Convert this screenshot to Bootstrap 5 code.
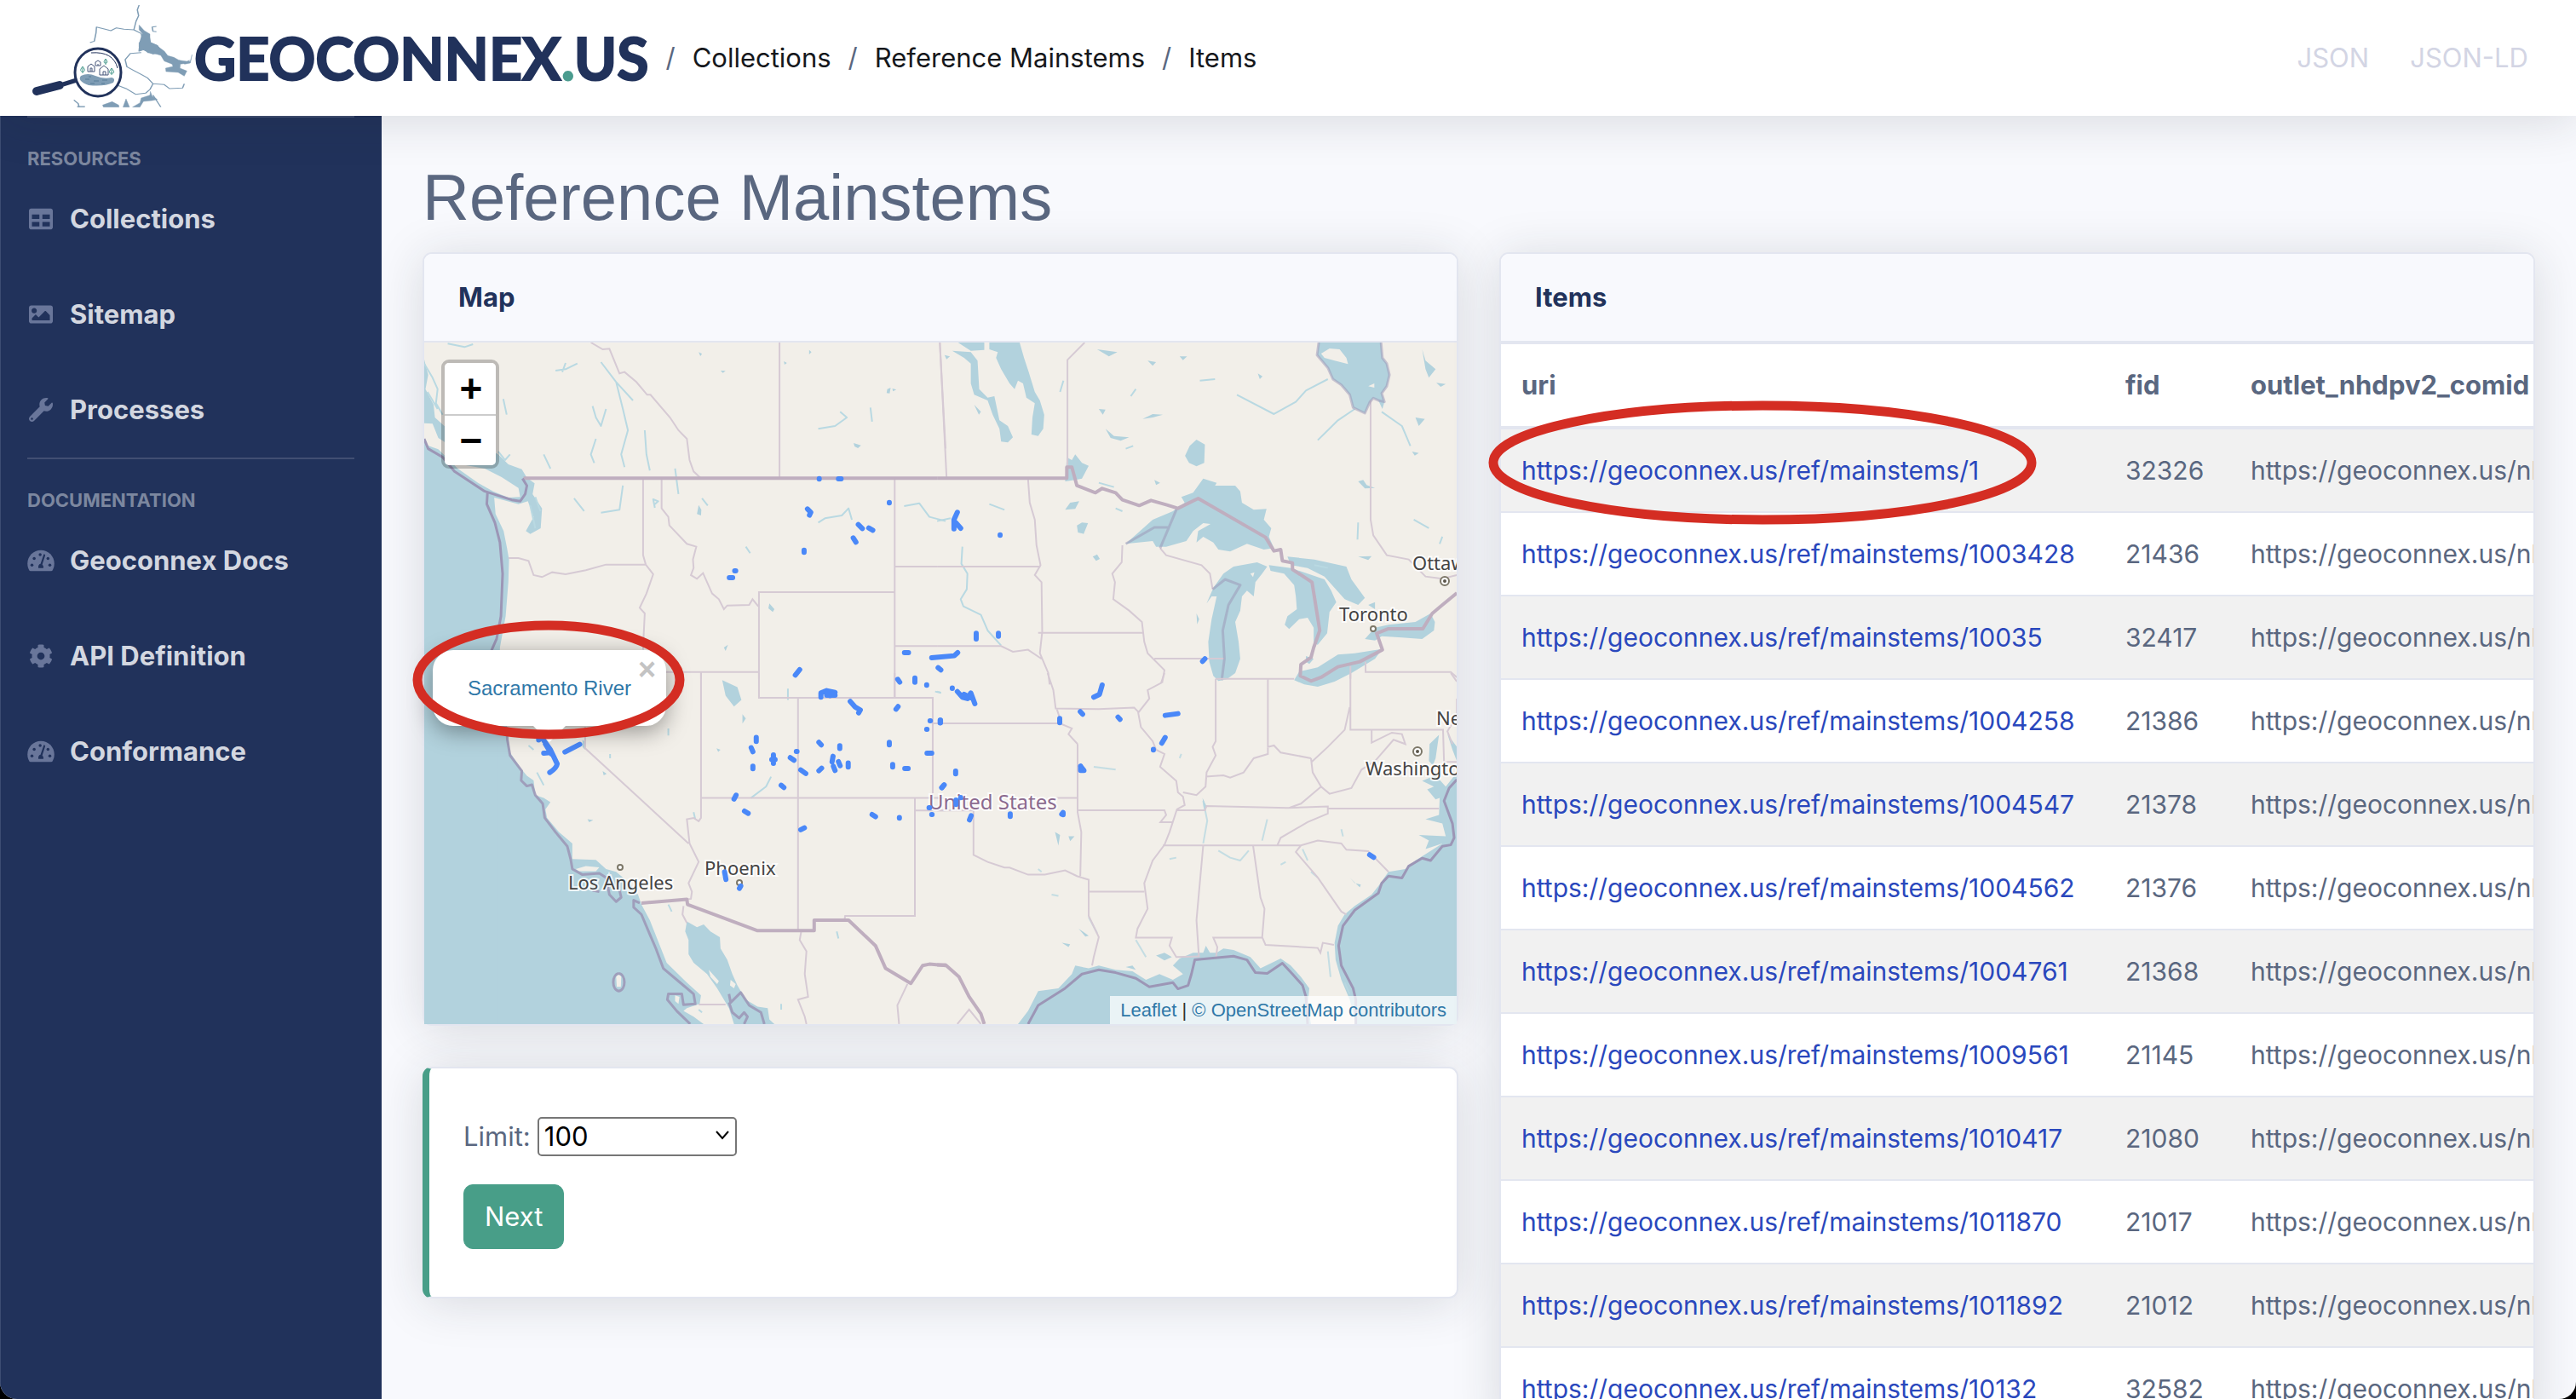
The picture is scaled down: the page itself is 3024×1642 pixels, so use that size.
<!DOCTYPE html>
<html lang="en">
<head>
<meta charset="utf-8">
<meta name="viewport" content="width=device-width, initial-scale=1">
<title>Reference Mainstems - geoconnex.us</title>
<link href="https://cdn.jsdelivr.net/npm/bootstrap@5.3.0/dist/css/bootstrap.min.css" rel="stylesheet">
<style>
:root{--navy:#21325b;--slate:#5a6780;--line:#e3e6f0;--green:#489e88;--water:#b2d2dd}
html{background:#000}
body{font-family:Inter,"Liberation Sans",sans-serif;font-size:31px;line-height:48px;color:var(--slate);background:#000}
.app{background:#f8f9fd;border-radius:0 0 20px 20px}
.soft-shadow{box-shadow:0 5px 56px 0 rgba(33,40,50,.15)}
.topbar{height:136px;background:#fff;z-index:5;position:relative;padding:0 56px 0 0}
.brand-art{width:228px;height:136px}
.brand-name{font-family:Lato,sans-serif;font-weight:700;font-size:68px;line-height:80px;color:var(--navy);-webkit-text-stroke:2px var(--navy);stroke-linejoin:round}
.brand-dot{color:#4b9c8f;-webkit-text-stroke-color:#4b9c8f}
.breadcrumb{--bs-breadcrumb-item-padding-x:20px;--bs-breadcrumb-divider-color:var(--slate)}
.breadcrumb a{color:#16181c}
.fmt-link{color:#d3d5e4}
.side{width:448px;background:var(--navy);border-left:1px solid #3c4c72;z-index:2}
.side-rule{height:2px;margin:0 32px 0 31px;background:#414f72}
.side-head{font-size:22px;line-height:24px;font-weight:700;padding:36px 31px 3px;color:#7c879f}
.side-link{height:112px;padding:0 31px;font-weight:700;color:#d3d7e0}
.side-link svg{width:32px;height:28px;fill:#69769a;margin-right:18px}
.side-link:hover{color:#fff}
.page{padding:48px}
.page-title{font-family:"Liberation Sans",Arial,sans-serif;font-size:76px;line-height:96px;font-weight:400;color:var(--slate)}
.page-grid{display:grid;grid-template-columns:1fr 1fr;gap:48px}
.panel{border:2px solid var(--line);border-radius:11px;--bs-card-inner-border-radius:9px}
.panel .card-header{padding:27px 40px;background:#f8f9fd;border-bottom:2px solid var(--line);color:var(--navy);font-weight:700}
.panel-accent{border-left:8px solid var(--green)}
.limit-form{gap:32px;padding:56px 40px}
.limit-select{width:234px;height:46px;border:2px solid #767676;border-radius:5px;background:#fff;color:#000;font-size:31px;line-height:40px;padding:0 6px;appearance:none}
.chev{right:8px;top:15px;width:18px;height:14px;pointer-events:none}
.next-btn{--bs-btn-bg:var(--green);--bs-btn-border-color:var(--green);--bs-btn-color:#fff;--bs-btn-hover-bg:#3c8673;--bs-btn-hover-color:#fff;font-size:31px;line-height:48px;padding:13px 24px;border-radius:11px}
.map-svg path{vector-effect:non-scaling-stroke}
.map-svg .sea{fill:var(--water)}
.map-svg .ground{fill:#f2efe9}
.map-svg .state{fill:none;stroke:#d6cad4;stroke-width:2}
.map-svg .nation{fill:none;stroke:#bfaebf;stroke-width:4;stroke-linejoin:round}
.map-svg .marine{fill:none;stroke:#9c96b6;stroke-width:3;stroke-linejoin:round}
.map-svg .brook{fill:none;stroke:#b9d9e2;stroke-width:2;stroke-linejoin:round}
.map-svg .reach{fill:none;stroke:#4a88f8;stroke-width:6;stroke-linecap:round;stroke-linejoin:round}
.map-svg text{font-family:"Noto Sans",sans-serif;font-size:22px;fill:#444;stroke:#fff;stroke-opacity:.8;stroke-width:4;paint-order:stroke}
.map-svg text.land-name{font-size:24px;fill:#8b6a8f}
.zoomer{left:20px;top:20px;border:4px solid rgba(0,0,0,.22);border-radius:9px;background-clip:padding-box}
.zoomer button{width:60px;height:60px;border:0;background:#fff;color:#000;font:700 46px/60px "Liberation Sans",sans-serif;padding:0 0 0 2px}
.zoomer button+button{border-top:2px solid #ccc;line-height:58px}
.pop{left:10px;top:361px;width:274px;height:89px;background:#fff;border-radius:24px;box-shadow:0 6px 28px rgba(0,0,0,.4);font:24px/36px "Liberation Sans",sans-serif}
.pop::after{content:"";position:absolute;left:117px;top:88px;border:20px solid transparent;border-top-color:#fff;border-bottom:0}
.pop a,.credit a{color:#2f78a8}
.pop button{right:12px;top:3px;border:0;background:none;color:#c3c3c3;font:700 36px/40px "Liberation Sans",sans-serif;padding:0}
.credit{right:0;bottom:0;height:33px;padding:0 12px;background:rgba(255,255,255,.72);font:22px/33px "Liberation Sans",sans-serif;color:#333}
.ring{fill:none;stroke:#d42d23;stroke-width:11}
.ring-map{left:-14px;top:326px;width:320px;height:140px;z-index:4}
.ring-row{left:-15px;top:172px;width:645px;height:146px;z-index:4}
.items{--bs-table-color:var(--slate);--bs-table-striped-color:var(--slate);--bs-table-striped-bg:#f1f1f1;--bs-table-bg:#fff;white-space:nowrap}
.items th,.items td{padding:24px;border:0 solid var(--line);border-top-width:2px}
.items td{font-size:30px}
.items thead th{border-bottom-width:4px}
.items tbody tr:first-child td{border-top:0}
.items a{color:#2a48bd}
.c-uri{min-width:709px}.c-fid{min-width:147px}
</style>
<script src="https://cdn.jsdelivr.net/npm/bootstrap@5.3.0/dist/js/bootstrap.bundle.min.js" defer></script>
</head>
<body>
<div class="app d-flex flex-column vh-100 overflow-hidden">
<header class="topbar soft-shadow d-flex align-items-center flex-shrink-0">
  <a class="d-flex align-items-center text-decoration-none" href="#">
    <svg class="brand-art" viewBox="0 0 228 136" aria-hidden="true">
      <g transform="scale(.5102 .3333)" fill="none" stroke="#7f9db5" stroke-width="3" stroke-linejoin="round">
        <path d="M320 18 316 35 319 55 313 75 308 105 285 103 268 98 255 108 240 102 222 95 221 115 217 145 207 150M308 105 325 118 328 140M360 93 350 95 352 110 360 112M325 185 300 188 288 210 292 235 310 250 325 262 340 275 352 295 345 315 335 328 312 332 290 312 262 295M352 295 378 298 390 312 420 310 424 295M170 352 180 365 182 377M352 335 370 377"/>
        <path fill="#7f9db5" stroke-width="1" d="M320 88 332 108 345 120 345 150 360 160 378 180 386 196 400 202 412 212 430 216 436 212 432 222 415 226 414 240 430 250 424 268 410 255 382 252 381 240 398 234 396 226 378 215 370 195 355 188 340 186 328 168 320 165 320 150 330 140 330 122 320 105ZM412 212 425 222 438 215 442 192 438 222 425 226ZM236 370 258 358 273 370 274 377 238 377ZM290 348 298 377 283 377ZM305 377 322 362 325 345 345 335 346 322 350 338 362 350 350 354 330 357 322 377ZM178 374H195V377H178Z"/>
        <path fill="#7f9db5" d="M328 120 342 120 346 150 362 160 372 185 352 190 330 175 320 180 322 150Z"/>
      </g>
      <ellipse cx="115" cy="85" rx="27" ry="28" fill="#fff" stroke="#21325b" stroke-width="3"/>
      <path d="M107 62Q133 60 138 80" fill="none" stroke="#21325b" stroke-width="1"/>
      <path d="M95 89Q103 85 112 89T131 91Q136 92 133 97 122 102 104 100 90 95 95 89Z" fill="#7f9db5"/>
      <path d="M100 93h5M110 95h6M120 94h6M106 98h5M104 90h3M119 98h4" stroke="#587c97" stroke-width="1"/>
      <path d="M103 84V78l4-3 4 3v6zM106 84v-4h2v4M117 88v-7l5-4 5 4v7zM121 88v-4h3v4M112 77v-4l3-2 3 2v4zM115 77v-2" fill="#fff" stroke="#47567a" stroke-width="1"/>
      <path d="M97 86v-7m0-1c-4 5-2 6 0 6s4-1 0-6zM124 76v-6m0-1c-3 4-2 5 0 5s3-1 0-5zM131 88v-7m0-1c-4 5-3 6 0 6s4-1 0-6z" fill="none" stroke="#4b9c8f" stroke-width="1"/>
      <path d="M90 94 74 99" stroke="#21325b" stroke-width="5"/>
      <path d="M70 100 43 107" stroke="#21325b" stroke-width="10" stroke-linecap="round"/>
    </svg>
    <span class="brand-name">GEOCONNEX<span class="brand-dot">.</span>US</span>
  </a>
  <nav aria-label="breadcrumb">
    <ol class="breadcrumb mb-0">
      <li class="breadcrumb-item d-none"></li>
      <li class="breadcrumb-item"><a class="text-decoration-none" href="#">Collections</a></li>
      <li class="breadcrumb-item"><a class="text-decoration-none" href="#">Reference Mainstems</a></li>
      <li class="breadcrumb-item"><a class="text-decoration-none" href="#">Items</a></li>
    </ol>
  </nav>
  <nav class="ms-auto d-flex gap-5" aria-label="Formats">
    <a class="fmt-link text-decoration-none" href="#">JSON</a>
    <a class="fmt-link text-decoration-none" href="#">JSON-LD</a>
  </nav>
</header>
<div class="d-flex flex-grow-1 overflow-hidden">
  <nav class="side flex-shrink-0" aria-label="Main">
    <div class="side-rule"></div>
    <div class="side-head">RESOURCES</div>
    <a class="side-link d-flex align-items-center text-decoration-none" href="#"><svg viewBox="0 0 512 512"><path d="M464 32H48C21.49 32 0 53.49 0 80v352c0 26.51 21.49 48 48 48h416c26.51 0 48-21.49 48-48V80c0-26.51-21.49-48-48-48zM224 416H64v-96h160v96zm0-160H64v-96h160v96zm224 160H288v-96h160v96zm0-160H288v-96h160v96z"/></svg>Collections</a>
    <a class="side-link d-flex align-items-center text-decoration-none" href="#"><svg viewBox="0 0 512 512"><path d="M464 448H48c-26.51 0-48-21.49-48-48V112c0-26.51 21.49-48 48-48h416c26.51 0 48 21.49 48 48v288c0 26.51-21.49 48-48 48zM112 120c-30.928 0-56 25.072-56 56s25.072 56 56 56 56-25.072 56-56-25.072-56-56-56zM64 384h384V272l-87.515-87.515c-4.686-4.686-12.284-4.686-16.971 0L208 320l-55.515-55.515c-4.686-4.686-12.284-4.686-16.971 0L64 336v48z"/></svg>Sitemap</a>
    <a class="side-link d-flex align-items-center text-decoration-none" href="#"><svg viewBox="0 0 512 512"><path d="M507.73 109.1c-2.24-9.03-13.54-12.09-20.12-5.51l-74.36 74.36-67.88-11.31-11.31-67.88 74.36-74.36c6.62-6.62 3.43-17.9-5.66-20.16-47.38-11.74-99.55.91-136.58 37.93-39.64 39.64-50.55 97.1-34.05 147.2L18.74 402.76c-24.99 24.99-24.99 65.51 0 90.5 24.99 24.99 65.51 24.99 90.5 0l213.21-213.21c50.12 16.71 107.47 5.68 147.37-34.22 37.07-37.07 49.7-89.32 37.91-136.73zM64 472c-13.25 0-24-10.75-24-24 0-13.26 10.75-24 24-24s24 10.74 24 24c0 13.25-10.75 24-24 24z"/></svg>Processes</a>
    <div class="side-rule"></div>
    <div class="side-head">DOCUMENTATION</div>
    <a class="side-link d-flex align-items-center text-decoration-none" href="#"><svg viewBox="0 0 576 512"><path d="M288 32C129 32 0 161 0 320c0 53 14 102 39 145 6 9 16 15 28 15h443c11 0 21-6 27-15 25-43 39-92 39-145C576 161 447 32 288 32z"/><g fill="#21325b"><circle cx="96" cy="352" r="32"/><circle cx="480" cy="352" r="32"/><circle cx="144" cy="208" r="32"/><circle cx="272" cy="130" r="32"/><circle cx="440" cy="208" r="32"/><path d="M348 120q30-8 34 20L318 336q34 32 24 80H234q-10-78 46-92z"/></g></svg>Geoconnex Docs</a>
    <a class="side-link d-flex align-items-center text-decoration-none" href="#"><svg viewBox="0 0 512 512"><path d="M487.4 315.7l-42.6-24.6c4.3-23.2 4.3-47 0-70.2l42.6-24.6c4.9-2.8 7.1-8.6 5.5-14-11.1-35.6-30-67.8-54.7-94.6-3.8-4.1-10-5.1-14.8-2.3L380.8 110c-17.9-15.4-38.5-27.3-60.8-35.1V25.8c0-5.6-3.9-10.5-9.4-11.7-36.7-8.2-74.3-7.8-109.2 0-5.5 1.2-9.4 6.1-9.4 11.7V75c-22.2 7.9-42.8 19.8-60.8 35.1L88.7 85.5c-4.9-2.8-11-1.9-14.8 2.3-24.7 26.7-43.6 58.9-54.7 94.6-1.7 5.4.6 11.2 5.5 14L67.3 221c-4.3 23.2-4.3 47 0 70.2l-42.6 24.6c-4.9 2.8-7.1 8.6-5.5 14 11.1 35.6 30 67.8 54.7 94.6 3.8 4.1 10 5.1 14.8 2.3l42.6-24.6c17.9 15.4 38.5 27.3 60.8 35.1v49.2c0 5.6 3.9 10.5 9.4 11.7 36.7 8.2 74.3 7.8 109.2 0 5.5-1.2 9.4-6.1 9.4-11.7v-49.2c22.2-7.9 42.8-19.8 60.8-35.1l42.6 24.6c4.9 2.8 11 1.9 14.8-2.3 24.7-26.7 43.6-58.9 54.7-94.6 1.5-5.5-.7-11.3-5.6-14.1zM256 336c-44.1 0-80-35.9-80-80s35.9-80 80-80 80 35.9 80 80-35.9 80-80 80z"/></svg>API Definition</a>
    <a class="side-link d-flex align-items-center text-decoration-none" href="#"><svg viewBox="0 0 576 512"><path d="M288 32C129 32 0 161 0 320c0 53 14 102 39 145 6 9 16 15 28 15h443c11 0 21-6 27-15 25-43 39-92 39-145C576 161 447 32 288 32z"/><g fill="#21325b"><circle cx="96" cy="352" r="32"/><circle cx="480" cy="352" r="32"/><circle cx="144" cy="208" r="32"/><circle cx="272" cy="130" r="32"/><circle cx="440" cy="208" r="32"/><path d="M348 120q30-8 34 20L318 336q34 32 24 80H234q-10-78 46-92z"/></g></svg>Conformance</a>
  </nav>
  <main class="page flex-grow-1 overflow-hidden">
    <h1 class="page-title mb-3">Reference Mainstems</h1>
    <div class="page-grid align-items-start">
      <div class="d-flex flex-column gap-5">
        <section class="card panel soft-shadow">
          <div class="card-header">Map</div>
          <div class="position-relative">
            <svg class="map-svg d-block w-100" viewBox="498 402 1212 800" role="img" aria-label="Map of the United States">
              <rect x="498" y="402" width="1212" height="800" fill="#f2efe9"/>
              <g transform="translate(490 390) scale(.3954 .3333)">
                <!-- Pacific Northwest, Rockies -->
                <g>
                  <path class="sea" d="M20 95 32 150 24 200 48 255 52 300 80 330 240 430 270 465 310 482 325 512 348 532 342 570 370 620 366 690 335 710 322 700 345 650 328 595 300 605 228 582 232 640 256 700 266 760 272 800 270 880 262 1000 245 1110 240 1420 275 1500 275 2436 20 2436Z"/>
                  <path class="ground" d="M20 320 45 322 62 372 98 400 130 465 200 480 250 510 300 548 305 580 270 582 225 560 180 530 120 480 62 412 30 398 20 380Z"/>
                  <path class="brook" d="M20 110 45 160 60 200 55 250 75 290M30 210 60 270M90 40 140 52 165 42M410 135 440 130 475 110M430 140 440 108M545 105 590 175 640 240M590 175 610 270 625 345 605 430 615 475M675 345 680 430 690 487M530 375 515 430 525 460M520 260 530 300 545 330 560 270M375 430 395 480M255 235 265 290M705 605 715 595 700 588 705 618M765 480 775 570M610 540 600 625 545 635M465 585 495 630M1190 670 1210 655 1260 645 1280 620 1290 660M1190 340 1240 330 1275 300 1255 280M1445 612 1490 602 1520 650 1568 665M1345 265 1350 315M240 420 260 450 275 430M350 580 365 630M335 610 350 690M975 755 988 778M845 585 862 610"/>
                  <path class="sea" d="M835 608 843 625 842 645 830 640ZM1045 955 1060 975 1055 985 1042 972ZM1295 390 1317 398 1308 408 1298 402ZM1395 200 1405 195 1402 215 1393 214ZM1410 198 1422 202 1412 208ZM835 70 845 76 840 84ZM900 135 915 136 907 143ZM1163 62 1170 70 1163 78ZM1088 102 1097 108 1090 114ZM910 1110 922 1100 915 1122Z"/>
                  <path class="state" d="M515 36 550 60 570 58 600 145 615 140 650 175 682 220 692 220 750 300 775 345 800 375 808 450 820 490 840 512"/>
                  <path class="state" d="M1075 36V512M1551 36 1568 410M670 518V785L678 818M725 518V620L745 650 748 680 800 745 828 755 818 800 820 830 812 855 830 868 848 848 875 920 895 940 910 975 920 962 985 960 995 940 1012 965M270 795H300L330 805 345 855 370 862 400 845 440 852 500 838 560 818H678L700 852 680 920 660 970 675 990 672 1060 670 1118M1014 1196V915H1417M1417 518V1287M1417 825H1543M1417 1105H1543M735 1196H1014M842 1196V1220M1014 1190V1220"/>
                  <path class="nation" d="M315 514H1543"/>
                  <path class="marine" d="M20 375 32 410 75 440 110 490 200 560 280 590 305 595 320 570 325 540 312 515M208 566 206 605 230 670 245 740 253 850 248 1000 235 1080 220 1120"/>
                </g>
                <!-- Great Lakes, Ontario -->
                <g transform="translate(1543 0)">
                  <path class="sea" d="M155 36H245L258 90 272 140 290 210 305 240 318 290 315 340 300 365 280 360 283 300 290 250 265 230 255 180 240 170 230 200 215 180 190 130 175 90 180 70 155 60ZM45 65 100 70 120 100 125 200 150 230 170 225 185 310 210 330 225 370 210 388 190 385 185 340 165 290 150 240 110 220 100 180 100 110 80 90ZM62 36H140V62L100 65ZM110 255 130 280 124 290ZM385 440 400 450 410 430 430 460 450 470 430 515 410 520 380 525ZM750 400 770 378 795 395 793 460 770 472 748 460 736 435ZM1133 36H1318L1322 90 1335 110 1343 150 1335 190 1320 215 1328 245 1322 270 1310 240 1295 232 1285 245 1270 285 1235 265 1225 220 1200 185 1175 165 1160 125 1128 80Z"/>
                  <path class="sea" d="M560 745 640 660 700 630 735 600 725 580 760 565 790 515 830 530 825 540 885 540 900 560 905 600 940 625 978 622 970 660 992 690 985 720 1000 760 970 765 920 745 870 772 835 765 820 740 790 720 770 740 775 700 812 675 790 672 760 700 740 735 680 755 650 755 640 735ZM800 955 820 900 850 850 880 825 950 810 980 825 965 850 945 880 940 930 920 910 905 930 900 980 885 1020 895 1090 900 1150 885 1200 860 1222 835 1228 820 1210 808 1160 805 1090 815 1010 830 930 815 930ZM985 820 1050 830 1100 850 1150 870 1170 910 1185 950 1165 985 1158 1060 1130 1100 1118 1095 1118 1040 1100 1005 1075 1010 1045 1045 1032 1030 1040 1000 1068 975 1065 930 1060 890 1030 850 990 840ZM1040 790 1120 800 1215 825 1230 870 1270 935 1250 960 1210 940 1180 900 1150 860 1100 830 1050 820ZM1270 1080 1300 1040 1340 1030 1420 1020 1465 990 1478 1020 1475 1050 1440 1080 1380 1075 1320 1070 1300 1085ZM1060 1225 1075 1195 1130 1180 1190 1135 1240 1130 1322 1115 1300 1150 1230 1200 1180 1230 1130 1248 1090 1240ZM1095 1140 1118 1150 1105 1168 1095 1160ZM380 625 395 600 422 595 410 622ZM415 680 430 670 448 672 435 710 418 705ZM462 790 475 782 483 798 472 805ZM1250 525 1265 520 1275 538 1300 548 1270 550ZM1410 420 1430 425 1418 434ZM1420 300 1448 305 1430 330ZM1482 178 1510 182 1495 192ZM1440 60 1450 100 1480 130 1460 160 1450 130ZM475 60 535 70 510 85ZM625 100 650 105 640 118ZM500 340 525 365 570 370 545 382 515 372ZM480 270 500 272 492 290ZM610 305 640 288 670 290 640 300ZM720 85 742 85 730 98ZM952 145 966 155 958 165ZM22 80 38 85 28 95ZM770 990 778 1010 772 1028ZM1280 960 1300 950 1300 975ZM1250 790 1290 788 1280 802ZM645 520 662 530 650 538Z"/>
                  <path class="ground" d="M1140 75 1165 57 1195 60 1215 90 1220 112 1180 100 1150 90ZM1280 190 1298 180 1298 195ZM930 850 942 845 938 862Z"/>
                  <path class="brook" d="M75 755 72 815 90 850 88 905 70 940 78 965 130 995 150 1050 190 1103M0 665 40 655M1160 165 1095 205 1065 245 1000 288 890 220M1240 270 1190 310 1130 380M1320 280 1380 330 1405 400M155 605 200 625M480 530 525 545M530 620 550 630M575 225 590 200M365 210 375 170M560 410 582 400M1500 720 1492 745M1250 670 1248 730M1415 660 1460 690M780 170 825 165M1120 820 1160 830"/>
                  <path class="state" d="M8 36 28 510M387 475V97L438 36M1287 240V660L1295 715 1335 785 1400 800 1450 860 1500 868 1543 855M270 518 275 600 290 660 295 750 307 820 290 855 310 880 312 1055 305 1130 330 1200 334 1240M0 825H307M300 1058H610M550 750 548 810 520 850 528 880 523 940 570 980 608 1020 615 1090 625 1130 675 1190 668 1235M0 1105H190L225 1125 270 1118 310 1150M645 1149H852M1272 1160V1196H1525L1543 1215M1227 1175V1220M662 760 680 785 785 820 810 850 818 905"/>
                  <path class="marine" d="M818 905 855 870 900 890 865 960 848 1050 853 1150 845 1225M560 745 645 687H685M712 620 662 760" opacity=".5"/>
                  <path class="nation" d="M0 514H385V475H400L415 540 470 565 490 550 530 565 550 590 600 610 635 592 680 607 715 620 775 585 975 722 1000 770 1020 765 1025 805 1055 812V835L1113 880 1136 1050 1118 1110 1110 1145 1080 1170 1078 1210 1110 1228 1140 1215 1190 1178 1255 1160 1322 1118 1305 1060 1340 1044H1442L1470 990 1500 960 1543 918"/>
                  <path class="marine" opacity=".5" d="M1318 36 1322 90 1335 110 1343 150 1335 190 1320 215 1328 245 1310 240 1295 232 1285 245 1270 285 1235 265 1225 220 1200 185 1175 165 1160 125 1128 80 1133 36"/>
                </g>
                <!-- California, Southwest, Mexico -->
                <g transform="translate(0 1200)">
                  <path class="sea" d="M240 180H265L275 280 310 340 325 362 345 378 350 430 375 440 395 455 380 480 385 510 420 560 460 600 460 655 530 658 560 690 590 700 630 740 655 780 665 815 690 870 710 930 740 1020 800 1090 842 1135 838 1165 800 1180 790 1190 820 1210 850 1236H240ZM800 875 830 895 850 885 870 910 898 930 900 970 920 1010 935 1060 950 1100 975 1150 1010 1175 1040 1180 1045 1220 1060 1236H940L925 1180 890 1110 860 1060 820 1020 805 990 805 940 795 910ZM905 25 950 50 962 95 940 118 915 80ZM965 145 975 160 965 178ZM505 515 522 518 510 525ZM490 235 500 245 497 270 490 260ZM888 265 900 270 893 278ZM550 345 562 355 553 360Z"/>
                  <path class="ground" d="M590 1070 598 1060 605 1070 604 1105 592 1105ZM865 1045 895 1085 890 1095 870 1070ZM930 1080 945 1095 940 1110 928 1100ZM765 1135 778 1140 775 1165 765 1155ZM470 690 500 680 540 684 530 698 480 698Z"/>
                  <path class="brook" d="M355 350 375 395M330 255 345 270M1050 365 1035 400 990 440M745 195V220M572 285V300M1100 55V95M820 490 825 515M745 815 755 840M1245 910 1250 935M835 1185 845 1195M1080 1165V1185M1537 65 1555 70"/>
                  <path class="state" d="M842 0V510L835 522 820 510 800 515 808 600 835 665 805 740 815 770 812 795 800 797M1014 0V87H1530V440M1130 87V905M842 440H1568M1417 0V87M1530 177H1568M498 190V265L805 600M1477 440V855H1270L1268 870M1477 484H1568M1140 907 1135 940 1155 980 1150 1060 1160 1140 1130 1150 1150 1210 1155 1236M1455 1095 1425 1170 1430 1236M790 820 787 850 800 880M835 1167H915"/>
                  <path class="nation" d="M665 810 800 797 802 815 1010 907H1178V870H1280L1360 960 1390 1040 1465 1093 1500 1030 1520 1025 1568 1030"/>
                  <path class="marine" d="M265 190 267 235 275 290 310 345 308 378 325 398 340 393 350 430 372 460 378 510 410 560 445 610 455 655 460 690 490 710 540 705 560 720 570 780 590 805 605 790 600 765M520 765 540 770M660 810 642 800 642 825 665 850 690 920 708 970 730 1040 780 1090 820 1130 825 1165 790 1168 785 1130 745 1130 742 1150 770 1190 810 1236M598 1058C620 1062 620 1115 598 1120 576 1115 576 1062 598 1058M925 1130 930 1160 960 1125 985 1170 1020 1195 1030 1236M925 1160 935 1195 955 1215 970 1195 980 1210 970 1236" opacity=".85"/>
                </g>
                <!-- Plains, South, Atlantic -->
                <g transform="translate(1543 1200)">
                  <path class="sea" d="M1543 350 1510 400 1480 360 1440 380 1475 400 1455 410 1480 445 1492 440 1490 500 1450 515 1500 530 1510 575 1430 570 1460 590 1450 620 1500 600 1420 660 1390 690 1340 700 1310 750 1290 780 1240 820 1210 850 1190 890 1180 950 1183 1010 1200 1080 1225 1150 1245 1236H1543ZM240 1236 270 1190 300 1120 360 1110 400 1060 410 1030 450 1040 480 1030 530 1045 580 1050 620 1080 660 1060 700 1080 730 1060 700 1030 720 1005 760 985 790 985 798 960 810 985 830 985 850 970 880 975 930 1000 960 1040 1020 1005 1050 1030 1080 1070 1105 1110 1100 1170 1110 1236ZM1460 310 1462 250 1490 218 1480 300 1472 325ZM1515 215 1543 260V310L1530 270ZM650 995 675 985 697 1000 675 1012ZM560 1035 580 1030 590 1045ZM420 900 450 925 440 928ZM370 950 395 955 390 965ZM1225 720 1240 740 1258 745 1255 755ZM350 560 365 570 360 608ZM390 575 408 575 395 592ZM788 440 800 470 792 480Z"/>
                  <path class="brook" d="M790 450 802 520 790 600M980 515 965 590M1160 980 1168 1070M450 860 475 915M1200 550 1205 575M465 330 530 340M835 625 870 650 900 660 925 625M1020 675 1035 665M690 655 710 650M1085 620 1100 660M1110 700 1130 720M300 690 310 700M0 65 10 68M340 780 360 785M590 940 620 1000M720 300 725 285M1210 1090 1225 1130" opacity=".8"/>
                  <path class="state" d="M0 177H370M0 440H15M355 440H417M0 484H108V640L150 665 200 685 215 685 270 710 320 710 380 695 415 715 450 728V855L480 930 465 1000 460 1030M450 770H615M417 250V490L428 560 425 715M328 0 345 60 352 125 480 127 585 122 600 140M355 125 370 180 400 195 390 215 417 250M675 0 665 35 625 60 630 90 597 140 605 190 640 240 650 270 675 285 662 330 710 380 715 420 730 435 735 465 712 480 690 560 675 605 640 660 615 740 625 830 595 900 590 932H697L690 960 710 1000 780 998M417 483H675L680 500 663 525H700M712 483H795L800 468 1040 475 1160 470V477H1490M1160 470V495L1100 525 1020 580 1010 607M670 607H1080L1130 590 1200 600 1215 622 1280 627 1340 700M1080 607 1065 630 1130 720 1200 840 1215 850M790 607 770 870 777 995M938 607 960 790 972 830 965 932H820L832 965 828 1000M965 930 975 957 1130 968 1138 985 1145 950 1178 957M827 20V240L818 260 827 290 800 350 797 400 770 430 730 420M827 20H1060M982 20V260L1000 255 1020 280 1110 300M797 365 850 360 870 368 910 350 940 300 982 285V260M1110 300 1115 350 1140 400 1165 425 1230 405 1260 340 1300 310 1355 235 1390 250 1380 215 1350 210 1290 245V200M1110 315 1160 260 1210 200 1225 120M1227 0V200H1502L1505 313H1543M1140 400 1080 460 1045 475M1525 0 1543 30M1543 90V150L1515 205 1530 250M60 1236 95 1185 130 1236"/>
                  <path class="nation" d="M0 1028H25L65 1070 95 1140 130 1200 140 1236"/>
                  <path class="marine" d="M1543 375 1520 405 1505 450 1530 530 1535 580 1525 605 1500 610 1465 660 1440 652 1400 680 1380 722 1340 715 1320 740 1310 775 1240 835 1205 890 1192 960 1200 1030 1235 1110 1243 1150 1243 1236M270 1236 300 1170 380 1110 430 1060 480 1045 530 1055 590 1075 630 1105 700 1090 715 1112 745 1100 755 1060 765 1010 880 997 920 1010 945 1055 980 1058 1025 1022 1055 1060 1085 1100 1095 1140 1100 1236"/>
                </g>
              </g>
              <g fill="#fff" stroke="#7c7768" stroke-width="2">
                <circle cx="728" cy="1018" r="3"/><circle cx="868" cy="1036" r="3"/><circle cx="1612" cy="738" r="3"/>
                <circle cx="1696" cy="682" r="5"/><circle cx="1664" cy="882" r="5"/>
              </g>
              <g fill="#5b564a"><circle cx="1696" cy="682" r="2"/><circle cx="1664" cy="882" r="2"/></g>
              <text x="667" y="1044">Los Angeles</text>
              <text x="827" y="1027">Phoenix</text>
              <text x="1572" y="729">Toronto</text>
              <text x="1658" y="669">Ottawa</text>
              <text x="1686" y="851">New York</text>
              <text x="1603" y="910">Washington</text>
              <text class="land-name" x="1090" y="950">United States</text>
              <g transform="translate(490 390) scale(.3954 .3333)">
                <path class="reach" d="M1193 515v2M1250 516h8M1401 599v2M1158 622l10 12-4 10M1309 677l12 14M1340 689l12 8M1294 724l8 15M1148 767v8M942 840h3M926 864h10M1446 1128h12M1527 1146 1594 1139 1604 1128M1546 1181l8 8M1135 1188 1122 1207"/>
                <path class="reach" transform="translate(1543 0)" d="M60 634 50 660V692M55 670 70 690M187 713v2M116 1060v20M182 1060v10M795 1150l-7 9"/>
                <path class="reach" transform="translate(0 1200)" d="M1426 22l6 10M1477 17v15M1512 41v2M1198 85V70L1215 62 1240 68M1215 78h25M1225 68v12M1285 100 1300 120 1315 130 1310 140M1427 118l-6 9M1522 168h1M1552 166v10M1512 198h1M1006 227v14M991 263l5 14M996 328v9M1057 288v30M1052 305h10M1107 298l11 9M1125 276h2M1192 244l7 9M1254 256v10M1234 293l-3 20M1250 312l5 14M1235 328l5 15M1279 317v14M1200 335l-8 9M1138 341l15 13M1401 244v9M1513 282h14M1411 322v9M1447 336h10M1080 395l8 8M1562 396l-5 8M946 430l-6 14M971 486l11 8M1350 498l10 8M1431 509v2M1519 474h2M1527 498h1M1138 552l11-7M912 700l4 27M960 750l-4 8M360 232v4M372 232 395 270 415 320Q413 335 393 350M375 282 395 280M380 250 398 285M438 278 482 251"/>
                <path class="reach" transform="translate(1543 1200)" d="M45 53v1M60 65 75 85 90 90 100 70 112 108M80 75l20 12M10 166v9M490 42 482 75 465 85M364 160v15M425 136l7 9M537 155l6 8M677 149 715 143M677 227l-10 20M642 269v2M55 345v10M21 394l-7 9M426 328v15h10L426 328M70 438v1M56 447v16M101 502l-5 15M217 496v9M370 497l4-6v8M1284 640l12 9"/>
              </g>
            </svg>
            <div class="zoomer position-absolute d-flex flex-column overflow-hidden">
              <button type="button" aria-label="Zoom in">+</button>
              <button type="button" aria-label="Zoom out">−</button>
            </div>
            <div class="pop position-absolute d-flex align-items-center justify-content-center">
              <a class="text-decoration-none" href="#">Sacramento River</a>
              <button class="position-absolute" type="button" aria-label="Close popup">×</button>
            </div>
            <div class="credit position-absolute"><a class="text-decoration-none" href="#">Leaflet</a> | <a class="text-decoration-none" href="#">© OpenStreetMap contributors</a></div>
            <svg class="ring-map position-absolute" viewBox="0 0 320 140" aria-hidden="true"><ellipse class="ring" cx="160" cy="70" rx="154" ry="64"/></svg>
          </div>
        </section>
        <section class="card panel panel-accent soft-shadow">
          <form class="limit-form d-flex flex-column align-items-start">
            <div class="d-flex align-items-center position-relative">
              <label for="limit" class="me-2">Limit:</label>
              <select id="limit" class="limit-select"><option>100</option><option>500</option><option>1000</option></select>
              <svg class="chev position-absolute" viewBox="0 0 18 14" fill="none" stroke="#000" stroke-width="2"><path d="M2 3l7 8 7-8"/></svg>
            </div>
            <button type="button" class="btn next-btn">Next</button>
          </form>
        </section>
      </div>
      <section class="card panel soft-shadow position-relative overflow-visible">
        <div class="card-header">Items</div>
        <div class="overflow-hidden">
          <table class="table table-striped items mb-0">
            <thead><tr><th class="c-uri">uri</th><th class="c-fid">fid</th><th>outlet_nhdpv2_comid</th></tr></thead>
            <tbody>
              <tr><td><a class="text-decoration-none" href="#">https://geoconnex.us/ref/mainstems/1</a></td><td>32326</td><td>https://geoconnex.us/nhdplusv2</td></tr>
              <tr><td><a class="text-decoration-none" href="#">https://geoconnex.us/ref/mainstems/1003428</a></td><td>21436</td><td>https://geoconnex.us/nhdplusv2</td></tr>
              <tr><td><a class="text-decoration-none" href="#">https://geoconnex.us/ref/mainstems/10035</a></td><td>32417</td><td>https://geoconnex.us/nhdplusv2</td></tr>
              <tr><td><a class="text-decoration-none" href="#">https://geoconnex.us/ref/mainstems/1004258</a></td><td>21386</td><td>https://geoconnex.us/nhdplusv2</td></tr>
              <tr><td><a class="text-decoration-none" href="#">https://geoconnex.us/ref/mainstems/1004547</a></td><td>21378</td><td>https://geoconnex.us/nhdplusv2</td></tr>
              <tr><td><a class="text-decoration-none" href="#">https://geoconnex.us/ref/mainstems/1004562</a></td><td>21376</td><td>https://geoconnex.us/nhdplusv2</td></tr>
              <tr><td><a class="text-decoration-none" href="#">https://geoconnex.us/ref/mainstems/1004761</a></td><td>21368</td><td>https://geoconnex.us/nhdplusv2</td></tr>
              <tr><td><a class="text-decoration-none" href="#">https://geoconnex.us/ref/mainstems/1009561</a></td><td>21145</td><td>https://geoconnex.us/nhdplusv2</td></tr>
              <tr><td><a class="text-decoration-none" href="#">https://geoconnex.us/ref/mainstems/1010417</a></td><td>21080</td><td>https://geoconnex.us/nhdplusv2</td></tr>
              <tr><td><a class="text-decoration-none" href="#">https://geoconnex.us/ref/mainstems/1011870</a></td><td>21017</td><td>https://geoconnex.us/nhdplusv2</td></tr>
              <tr><td><a class="text-decoration-none" href="#">https://geoconnex.us/ref/mainstems/1011892</a></td><td>21012</td><td>https://geoconnex.us/nhdplusv2</td></tr>
              <tr><td><a class="text-decoration-none" href="#">https://geoconnex.us/ref/mainstems/10132</a></td><td>32582</td><td>https://geoconnex.us/nhdplusv2</td></tr>
            </tbody>
          </table>
        </div>
        <svg class="ring-row position-absolute" viewBox="0 0 645 146" aria-hidden="true"><ellipse class="ring" cx="322" cy="73" rx="316" ry="67"/></svg>
      </section>
    </div>
  </main>
</div>
</div>
</body>
</html>
